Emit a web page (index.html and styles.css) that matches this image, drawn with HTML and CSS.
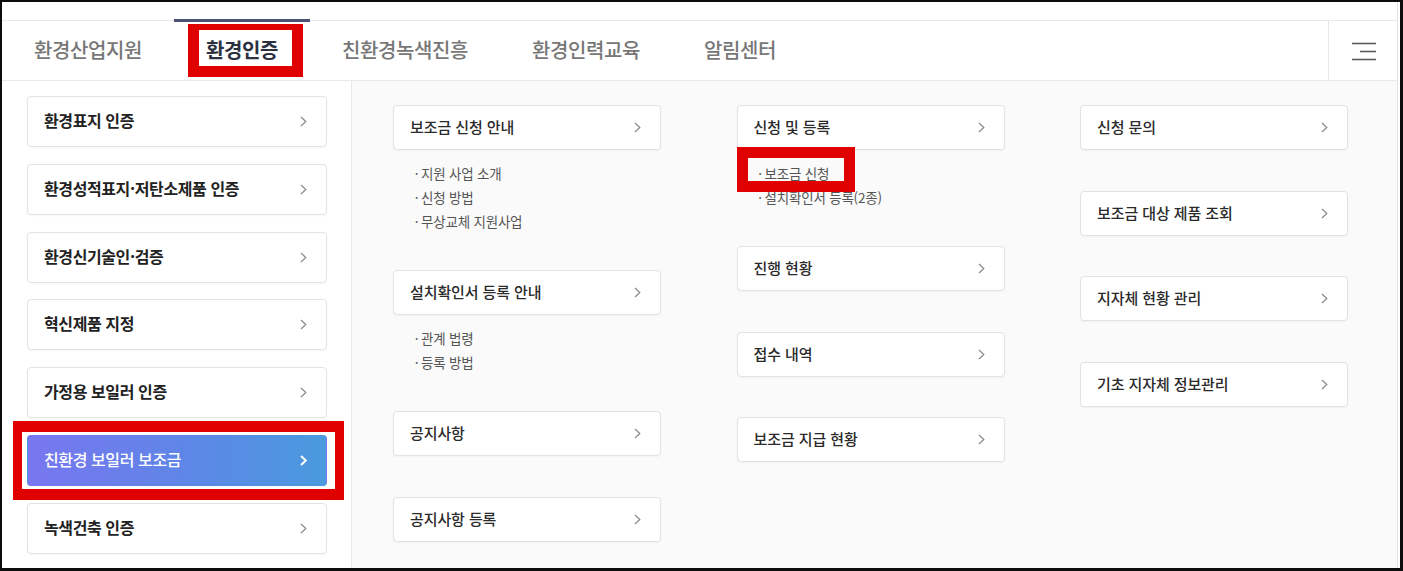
FILE: index.html
```html
<!DOCTYPE html>
<html lang="ko">
<head>
<meta charset="utf-8">
<title>환경인증 메뉴</title>
<link rel="stylesheet" href="styles.css">
</head>
<body>
<div class="frame">
  <div class="app">
    <nav class="gnb">
      <ul class="gnb-list">
        <li class="gnb-item">환경산업지원</li>
        <li class="gnb-item is-active">환경인증</li>
        <li class="gnb-item">친환경녹색진흥</li>
        <li class="gnb-item">환경인력교육</li>
        <li class="gnb-item">알림센터</li>
      </ul>
      <button class="menu-btn" type="button" aria-label="전체메뉴">
        <svg width="26" height="20" viewBox="0 0 26 20"><path d="M1 2.5H25M9 10.5H25M1 18.5H25" stroke="#555" stroke-width="1.6" fill="none"/></svg>
      </button>
    </nav>
    <div class="panel">
      <aside class="side">
        <a class="side-card">환경표지 인증<svg class="chev" width="7" height="11" viewBox="0 0 7 11"><polyline points="1,1 5.8,5.5 1,10"/></svg></a>
        <a class="side-card">환경성적표지·저탄소제품 인증<svg class="chev" width="7" height="11" viewBox="0 0 7 11"><polyline points="1,1 5.8,5.5 1,10"/></svg></a>
        <a class="side-card">환경신기술인·검증<svg class="chev" width="7" height="11" viewBox="0 0 7 11"><polyline points="1,1 5.8,5.5 1,10"/></svg></a>
        <a class="side-card">혁신제품 지정<svg class="chev" width="7" height="11" viewBox="0 0 7 11"><polyline points="1,1 5.8,5.5 1,10"/></svg></a>
        <a class="side-card">가정용 보일러 인증<svg class="chev" width="7" height="11" viewBox="0 0 7 11"><polyline points="1,1 5.8,5.5 1,10"/></svg></a>
        <a class="side-card is-active">친환경 보일러 보조금<svg class="chev" width="7" height="11" viewBox="0 0 7 11"><polyline points="1,1 5.8,5.5 1,10"/></svg></a>
        <a class="side-card">녹색건축 인증<svg class="chev" width="7" height="11" viewBox="0 0 7 11"><polyline points="1,1 5.8,5.5 1,10"/></svg></a>
      </aside>
      <section class="sub">
        <div class="col">
          <div class="group">
            <a class="card">보조금 신청 안내<svg class="chev" width="7" height="11" viewBox="0 0 7 11"><polyline points="1,1 5.8,5.5 1,10"/></svg></a>
            <ul class="links">
              <li>지원 사업 소개</li>
              <li>신청 방법</li>
              <li>무상교체 지원사업</li>
            </ul>
          </div>
          <div class="group">
            <a class="card">설치확인서 등록 안내<svg class="chev" width="7" height="11" viewBox="0 0 7 11"><polyline points="1,1 5.8,5.5 1,10"/></svg></a>
            <ul class="links">
              <li>관계 법령</li>
              <li>등록 방법</li>
            </ul>
          </div>
          <div class="group">
            <a class="card">공지사항<svg class="chev" width="7" height="11" viewBox="0 0 7 11"><polyline points="1,1 5.8,5.5 1,10"/></svg></a>
          </div>
          <div class="group">
            <a class="card">공지사항 등록<svg class="chev" width="7" height="11" viewBox="0 0 7 11"><polyline points="1,1 5.8,5.5 1,10"/></svg></a>
          </div>
        </div>
        <div class="col">
          <div class="group">
            <a class="card">신청 및 등록<svg class="chev" width="7" height="11" viewBox="0 0 7 11"><polyline points="1,1 5.8,5.5 1,10"/></svg></a>
            <ul class="links">
              <li>보조금 신청</li>
              <li>설치확인서 등록(2종)</li>
            </ul>
          </div>
          <div class="group">
            <a class="card">진행 현황<svg class="chev" width="7" height="11" viewBox="0 0 7 11"><polyline points="1,1 5.8,5.5 1,10"/></svg></a>
          </div>
          <div class="group">
            <a class="card">접수 내역<svg class="chev" width="7" height="11" viewBox="0 0 7 11"><polyline points="1,1 5.8,5.5 1,10"/></svg></a>
          </div>
          <div class="group">
            <a class="card">보조금 지급 현황<svg class="chev" width="7" height="11" viewBox="0 0 7 11"><polyline points="1,1 5.8,5.5 1,10"/></svg></a>
          </div>
        </div>
        <div class="col">
          <div class="group">
            <a class="card">신청 문의<svg class="chev" width="7" height="11" viewBox="0 0 7 11"><polyline points="1,1 5.8,5.5 1,10"/></svg></a>
          </div>
          <div class="group">
            <a class="card">보조금 대상 제품 조회<svg class="chev" width="7" height="11" viewBox="0 0 7 11"><polyline points="1,1 5.8,5.5 1,10"/></svg></a>
          </div>
          <div class="group">
            <a class="card">지자체 현황 관리<svg class="chev" width="7" height="11" viewBox="0 0 7 11"><polyline points="1,1 5.8,5.5 1,10"/></svg></a>
          </div>
          <div class="group">
            <a class="card">기초 지자체 정보관리<svg class="chev" width="7" height="11" viewBox="0 0 7 11"><polyline points="1,1 5.8,5.5 1,10"/></svg></a>
          </div>
        </div>
      </section>
    </div>
  </div>
  <div class="mark mark-tab"></div>
  <div class="mark mark-side"></div>
  <div class="mark mark-link"></div>
</div>
</body>
</html>
```
FILE: styles.css
```css
* { box-sizing: border-box; }
html, body { margin: 0; padding: 0; background: #fff; }
body {
  font-family: "Noto Sans CJK KR", "Noto Sans", "Liberation Sans", sans-serif;
  color: #222;
}
ul { list-style: none; margin: 0; padding: 0; }

.frame {
  position: relative;
  width: 1403px;
  height: 571px;
  border-style: solid;
  border-color: #0c0c0c;
  border-width: 2px 3px 3px 2px;
  background: #fff;
}
.app {
  height: 100%;
  margin-right: 2px;
  border-right: 1px solid #e4e4e4;
  padding-top: 18px;
  display: flex;
  flex-direction: column;
}

/* top navigation */
.gnb {
  display: flex;
  height: 61px;
  border-top: 1px solid #e9e9e9;
  border-bottom: 1px solid #e9e9e9;
  background: #fff;
}
.gnb-list {
  display: flex;
  flex: 1;
}
.gnb-item {
  display: flex;
  align-items: center;
  padding: 0 32px 4px;
  margin-top: -2px;
  border-top: 3px solid transparent;
  font-size: 20px;
  font-weight: 500;
  color: #777;
  letter-spacing: -0.4px;
}
.gnb-item.is-active {
  border-top-color: #4b5273;
  color: #2c3142;
  font-weight: 700;
}
.menu-btn {
  width: 69px;
  border: 0;
  border-left: 1px solid #e6e6e6;
  background: #fff;
  padding: 0 0 0 2px;
  display: flex;
  align-items: center;
  justify-content: center;
}

/* body */
.panel {
  flex: 1;
  display: flex;
  min-height: 0;
}
.side {
  width: 350px;
  border-right: 1px solid #e9e9e9;
  background: #fff;
  padding: 15px 0 0 25px;
  display: flex;
  flex-direction: column;
  gap: 16.8px;
}
.side-card {
  width: 300px;
  height: 51px;
  display: flex;
  align-items: center;
  justify-content: space-between;
  padding: 0 19px 3px 16px;
  border: 1px solid #e3e3e3;
  border-radius: 4px;
  background: #fff;
  box-shadow: 0 1px 2px rgba(0, 0, 0, 0.04);
  font-size: 16px;
  font-weight: 700;
  color: #222;
  letter-spacing: -0.4px;
}
.side-card .chev { margin-top: 3px; }
.side-card.is-active {
  border-color: transparent;
  background: linear-gradient(90deg, #7976f0 0%, #5d87e6 55%, #4a9ade 100%);
  color: #fff;
  font-weight: 500;
}
.chev {
  flex: none;
  fill: none;
  stroke: #8a8a8a;
  stroke-width: 1.2;
}
.side-card.is-active .chev {
  stroke: #fff;
  stroke-width: 2;
}

.sub {
  flex: 1;
  background: #fafafa;
  padding: 24px 0 0 41px;
  display: grid;
  grid-template-columns: repeat(3, 268px);
  column-gap: 75.5px;
  align-items: start;
}
.group {
  margin-bottom: 40.5px;
}
.card {
  height: 45px;
  display: flex;
  align-items: center;
  justify-content: space-between;
  padding: 0 19px 2px 16px;
  border: 1px solid #e2e2e2;
  border-radius: 4px;
  background: #fff;
  box-shadow: 0 1px 2px rgba(0, 0, 0, 0.04);
  font-size: 15px;
  font-weight: 500;
  color: #2a2a2a;
  letter-spacing: -0.1px;
}
.card .chev { margin-top: 2px; }
.links {
  padding: 12px 0 0 19px;
  margin-bottom: -4.5px;
}
.links li {
  display: flex;
  height: 24px;
  line-height: 23px;
  font-size: 13.5px;
  color: #555;
  letter-spacing: -0.2px;
}
.links li::before {
  content: "·";
  width: 9px;
  text-align: center;
}

/* annotation marks */
.mark {
  position: absolute;
  border: 11px solid #e00000;
}
.mark-tab {
  left: 186px;
  top: 22px;
  width: 115px;
  height: 53px;
  border-top-width: 6px;
}
.mark-side {
  left: 11px;
  top: 419px;
  width: 331px;
  height: 79px;
  border-width: 11px 9px;
}
.mark-link {
  left: 735px;
  top: 145px;
  width: 118px;
  height: 45px;
}
```
